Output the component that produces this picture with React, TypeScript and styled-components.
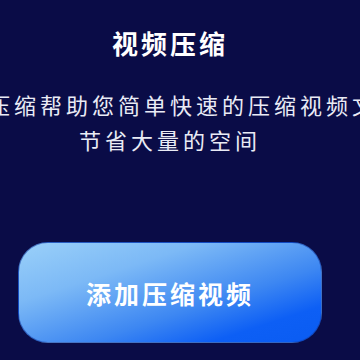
import React from 'react';
import styled, { createGlobalStyle } from 'styled-components';

const GlobalStyle = createGlobalStyle`
  html, body {
    margin: 0;
    padding: 0;
    background: #0a0c47;
  }
  body {
    font-family: "Noto Sans CJK SC", "Noto Sans", sans-serif;
    overflow: hidden;
  }
`;

const Page = styled.div`
  width: 360px;
  height: 360px;
  background: #0a0c47;
  overflow: hidden;
`;

const Content = styled.div`
  width: 340px;
  display: flex;
  flex-direction: column;
  align-items: center;
  padding-top: 25px;
`;

const Title = styled.h1`
  margin: 0;
  font-size: 26px;
  line-height: 36px;
  font-weight: 700;
  letter-spacing: 3px;
  color: #ffffff;
  white-space: nowrap;
`;

const Description = styled.div`
  margin-top: 26px;
  display: flex;
  flex-direction: column;
  align-items: center;
`;

const DescLine = styled.span`
  font-size: 22px;
  line-height: 35px;
  letter-spacing: 4px;
  color: #e9ebf5;
  white-space: nowrap;
`;

const AddButton = styled.button`
  margin-top: 85px;
  width: 304px;
  height: 101px;
  border: 1px solid rgba(20, 60, 160, 0.6);
  border-radius: 30px;
  background: linear-gradient(162deg, #9ad0f9 0%, #7cb9f6 30%, #3d87f2 62%, #0d5ff5 82%, #0a5cf2 100%);
  color: #ffffff;
  font-family: "Noto Sans CJK SC", "Noto Sans", sans-serif;
  font-size: 25px;
  font-weight: 700;
  letter-spacing: 3px;
  padding: 0;
  cursor: pointer;
`;

export default function App() {
  return (
    <>
      <GlobalStyle />
      <Page>
        <Content>
          <Title>视频压缩</Title>
          <Description>
            <DescLine>视频压缩帮助您简单快速的压缩视频文件</DescLine>
            <DescLine>节省大量的空间</DescLine>
          </Description>
          <AddButton>添加压缩视频</AddButton>
        </Content>
      </Page>
    </>
  );
}
